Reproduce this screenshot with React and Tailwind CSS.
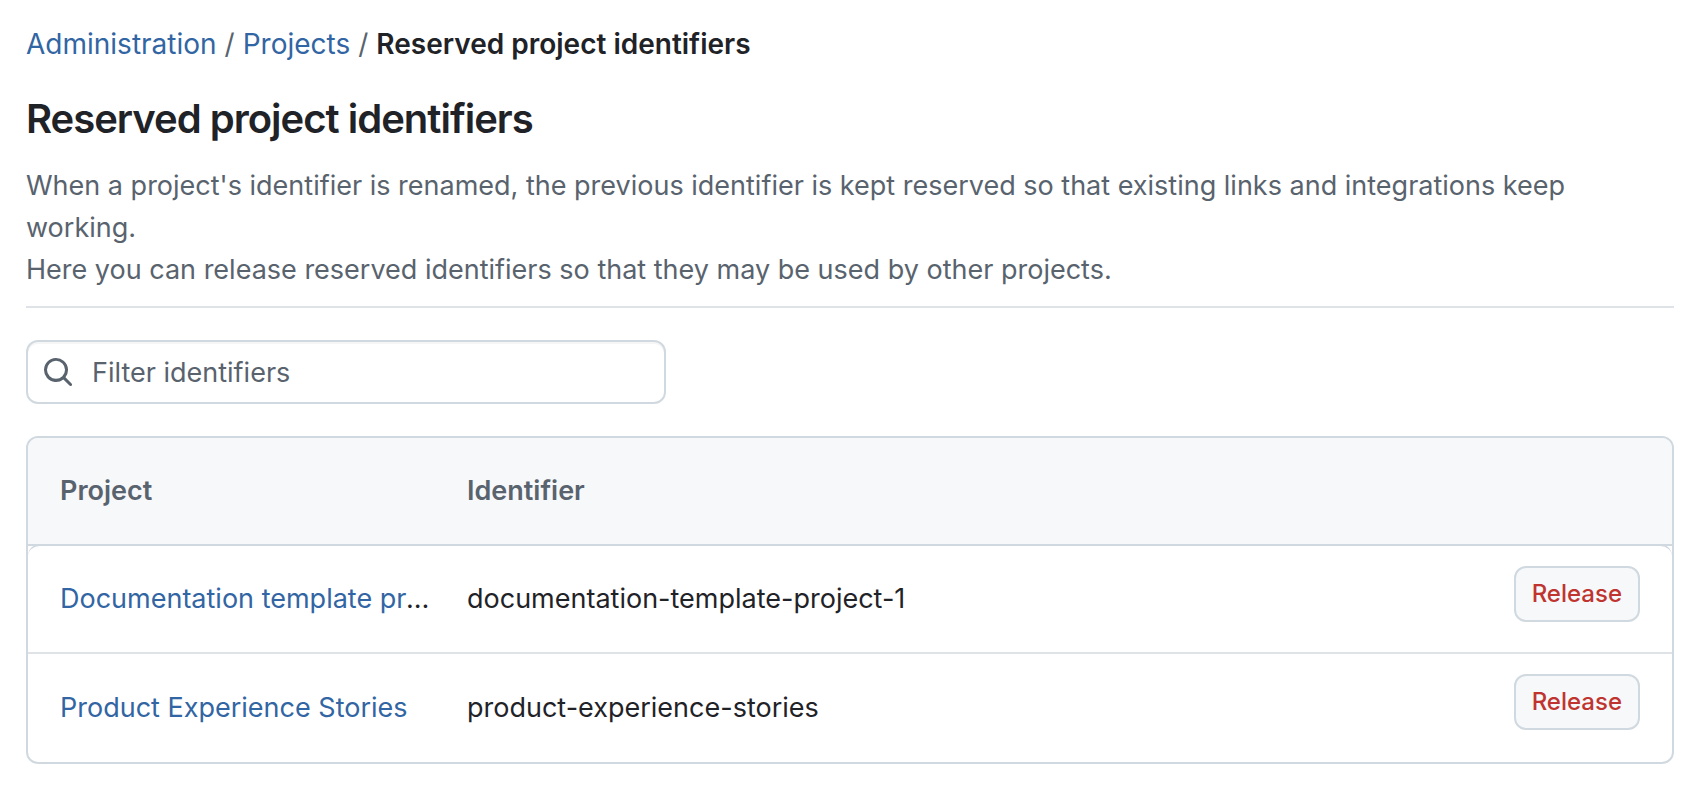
import { useState } from 'react'

const reserved = [
  { id: 1, project: 'Documentation template project', identifier: 'documentation-template-project-1' },
  { id: 2, project: 'Product Experience Stories', identifier: 'product-experience-stories' }
]

function Breadcrumb() {
  return (
    <nav aria-label="Breadcrumb">
      <ol className="flex items-center gap-2 text-[28px] leading-9">
        <li>
          <a href="#administration" className="text-[#3265a3] hover:underline">Administration</a>
        </li>
        <li aria-hidden="true" className="text-[#59636e]">/</li>
        <li>
          <a href="#projects" className="text-[#3265a3] hover:underline">Projects</a>
        </li>
        <li aria-hidden="true" className="text-[#59636e]">/</li>
        <li aria-current="page" className="font-semibold">Reserved project identifiers</li>
      </ol>
    </nav>
  )
}

function SearchIcon() {
  return (
    <svg viewBox="0 0 16 16" className="size-8 shrink-0 fill-[#59636e]" aria-hidden="true">
      <path d="M10.68 11.74a6 6 0 0 1-7.922-8.982 6 6 0 0 1 8.982 7.922l3.04 3.04a.749.749 0 0 1-.326 1.275.749.749 0 0 1-.734-.215ZM11.5 7a4.499 4.499 0 1 0-8.997 0A4.499 4.499 0 0 0 11.5 7Z" />
    </svg>
  )
}

export default function App() {
  const [filter, setFilter] = useState('')
  const [rows, setRows] = useState(reserved)

  const visibleRows = rows.filter((row) =>
    `${row.project} ${row.identifier}`.toLowerCase().includes(filter.toLowerCase())
  )

  const release = (id) => setRows(rows.filter((row) => row.id !== id))

  return (
    <main className="bg-white pt-[26px] pb-8 pl-[26px] pr-[30px] font-['Inter',sans-serif] text-[27px] text-[#1f2328]">
      <Breadcrumb />

      <header className="border-b-2 border-[#dfe3e8] pb-[15px]">
        <h1 className="mt-[27px] text-[40px] font-semibold leading-[60px] tracking-tight">Reserved project identifiers</h1>
        <p className="mt-4 leading-[42px] text-[#59636e]">
          When a project's identifier is renamed, the previous identifier is kept reserved so that existing links and integrations keep working.
          <br />
          Here you can release reserved identifiers so that they may be used by other projects.
        </p>
      </header>

      <label
        htmlFor="identifier-filter"
        className="mt-8 flex h-16 w-[640px] max-w-full items-center gap-[18px] rounded-xl border-2 border-[#d1d9e0] px-3.5 shadow-[inset_0_2px_0_#1f23280a]"
      >
        <SearchIcon />
        <input
          id="identifier-filter"
          type="text"
          aria-label="Filter identifiers"
          value={filter}
          onChange={(e) => setFilter(e.target.value)}
          placeholder="Filter identifiers"
          className="min-w-0 flex-1 bg-transparent pt-0.5 outline-none placeholder:text-[#59636e]"
        />
      </label>

      <div className="mt-8 overflow-hidden rounded-xl border-2 border-[#d1d9e0]">
        <table className="w-full table-fixed border-separate border-spacing-0 text-left">
          <thead className="bg-[#f6f8fa] text-[#59636e]">
            <tr className="h-[108px]">
              {/* the after: pieces round off the top corners of the body */}
              <th className="relative w-1/4 border-b-2 border-[#d1d9e0] pl-8 pr-1 font-semibold after:absolute after:top-full after:left-0 after:size-3 after:rounded-tl-xl after:border-t-2 after:border-[#d1d9e0]">
                Project
              </th>
              <th className="border-b-2 border-[#d1d9e0] pl-7 font-semibold">Identifier</th>
              <td className="relative w-[190px] border-b-2 border-[#d1d9e0] after:absolute after:top-full after:right-0 after:size-3 after:rounded-tr-xl after:border-t-2 after:border-[#d1d9e0]" />
            </tr>
          </thead>
          <tbody className="[&>tr:not(:last-child)>td]:border-b-2">
            {visibleRows.map((row) => (
              <tr key={row.id} className="h-[108px]">
                <td className="truncate border-[#dfe3e8] pl-8 pr-1">
                  <a href={`#${row.identifier}`} className="text-[#3265a3] hover:underline">{row.project}</a>
                </td>
                <td className="truncate border-[#dfe3e8] pl-7">{row.identifier}</td>
                <td className="border-[#dfe3e8] pt-5 pr-8 align-top">
                  <button
                    type="button"
                    onClick={() => release(row.id)}
                    className="ml-auto block h-14 rounded-xl border-2 border-[#d1d9e0] bg-[#f6f8fa] px-4 text-2xl font-medium text-[#c0342f] hover:bg-[#eff2f5]"
                  >
                    Release
                  </button>
                </td>
              </tr>
            ))}
          </tbody>
        </table>
      </div>
    </main>
  )
}
